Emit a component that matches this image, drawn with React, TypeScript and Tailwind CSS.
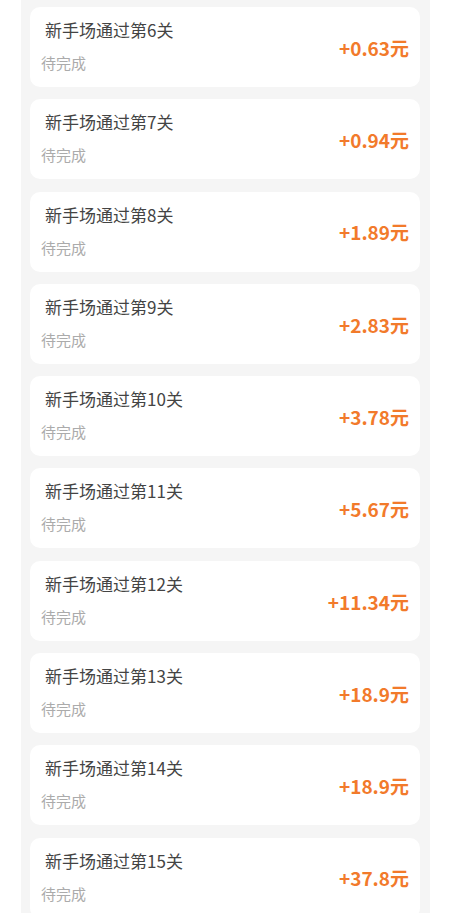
const tasks = [
  { level: 6, amount: "+0.63" },
  { level: 7, amount: "+0.94" },
  { level: 8, amount: "+1.89" },
  { level: 9, amount: "+2.83" },
  { level: 10, amount: "+3.78" },
  { level: 11, amount: "+5.67" },
  { level: 12, amount: "+11.34" },
  { level: 13, amount: "+18.9" },
  { level: 14, amount: "+18.9" },
  { level: 15, amount: "+37.8" },
];

export default function App() {
  return (
    <div
      className="h-[916px] overflow-hidden bg-white"
      style={{ fontFamily: '"Noto Sans CJK SC", "Noto Sans", sans-serif' }}
    >
      <div className="ml-[21px] w-[409px] h-[913px] overflow-hidden bg-[#f5f5f5] pt-[7px] pl-[9px] pr-[10px]">
        <div className="flex flex-col gap-[12.3px]">
          {tasks.map((t) => (
            <div
              key={t.level}
              className="h-[80px] shrink-0 rounded-[10px] bg-white flex items-center justify-between pr-[11px]"
            >
              {/* left: title + status */}
              <div className="self-start pt-[11px]">
                <div className="pl-[15px] text-[17px] leading-[24px] text-[#444444]">
                  新手场通过第{t.level}关
                </div>
                <div className="pl-[11px] mt-[10px] text-[15px] leading-[22px] text-[#ababab]">
                  待完成
                </div>
              </div>
              <div className="text-[19px] font-semibold text-[#f27a2b] pt-[2px]">
                {t.amount}元
              </div>
            </div>
          ))}
        </div>
      </div>
    </div>
  );
}
